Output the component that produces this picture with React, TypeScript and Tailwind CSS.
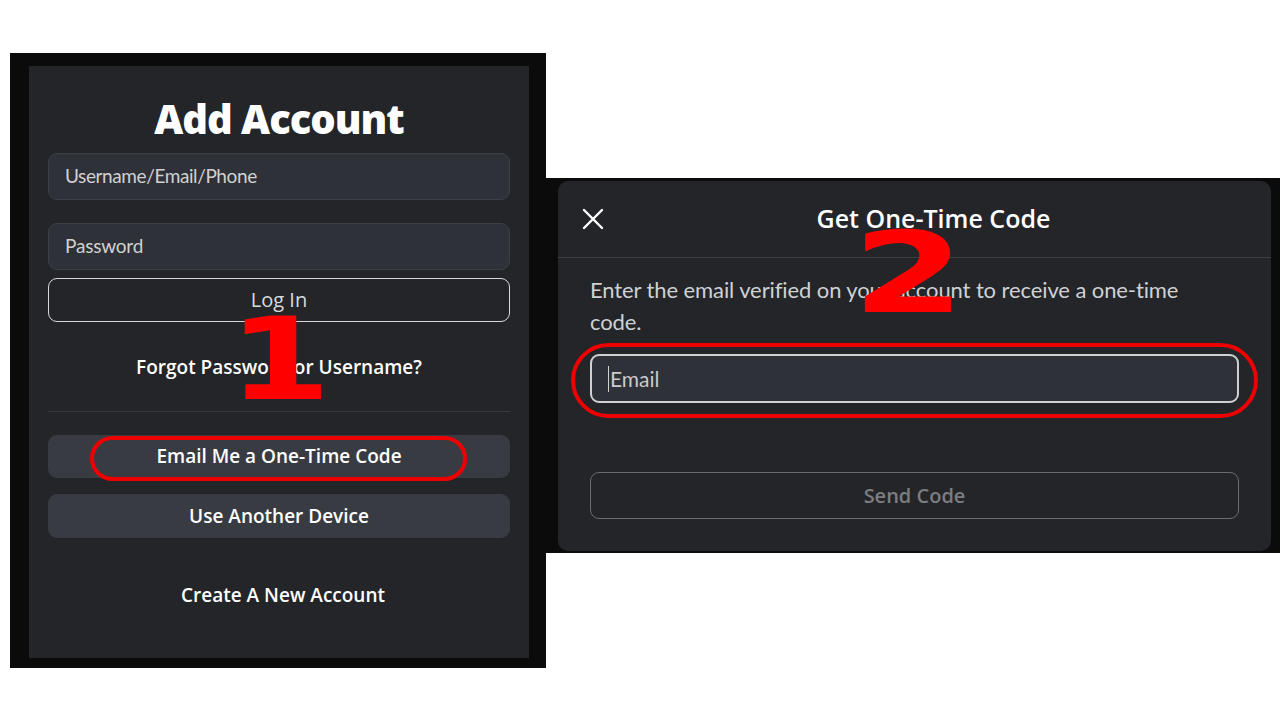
import React from "react";

const font = { fontFamily: '"Open Sans", "Noto Sans", sans-serif' };
const lato = { fontFamily: 'Lato, "Open Sans", sans-serif' };

function XIcon() {
  return (
    <svg width="22" height="22" viewBox="0 0 22 22" fill="none" stroke="white" strokeWidth="2.4" strokeLinecap="round">
      <path d="M2 2 L20 20 M20 2 L2 20" />
    </svg>
  );
}

export default function App() {
  return (
    <div className="w-[1280px] h-[720px] bg-white flex items-start pl-[10px] overflow-hidden" style={font}>
      {/* Left panel */}
      <div className="mt-[53px] w-[536px] h-[615px] bg-[#0b0b0c] pl-[19px] pr-[17px] pt-[13px] pb-[10px]">
        <div className="relative w-[500px] h-[592px] bg-[#232529] px-[19px] pt-[30px]">
          <h1 className="text-center text-white text-[40px] font-extrabold leading-[46px] tracking-tight">Add Account</h1>
          <div className="mt-[11px] h-[47px] rounded-[9px] bg-[#2e3138] border border-[#3c3f46] flex items-center px-[16px] text-[19px] tracking-[-0.4px] text-[#d0d1d3]" style={lato}>
            Username/Email/Phone
          </div>
          <div className="mt-[23px] h-[47px] rounded-[9px] bg-[#2e3138] border border-[#3c3f46] flex items-center px-[16px] text-[19px] tracking-[-0.2px] text-[#d0d1d3]" style={lato}>
            Password
          </div>
          <div className="mt-[8px] h-[44px] rounded-[9px] border border-[#d9d9d9] flex items-center justify-center text-[20px] font-medium text-[#d9dadc]">
            Log In
          </div>
          <div className="mt-[32px] text-center text-white text-[19px] font-semibold leading-[26px]">
            Forgot Password or Username?
          </div>
          <div className="mt-[31px] h-px bg-[#393b40]" />
          <div className="mt-[23px] h-[43px] rounded-[9px] bg-[#393b42] flex items-center justify-center text-[19px] font-semibold text-white">
            Email Me a One-Time Code
          </div>
          <div className="mt-[16px] h-[44px] rounded-[9px] bg-[#393b42] flex items-center justify-center text-[19px] font-semibold text-white">
            Use Another Device
          </div>
          <div className="mt-[44px] text-center text-white text-[19px] font-semibold leading-[26px] pl-[8px]">
            Create A New Account
          </div>

          {/* annotations */}
          <div className="absolute left-[61px] top-[370px] w-[377px] h-[45px] rounded-full border-[4px] border-[#ee0000]" />
          <div
            className="absolute left-[199px] top-[237px] text-[#ff0000] text-[114px] font-black leading-none origin-left"
            style={{ fontFamily: '"DejaVu Sans", sans-serif', transform: "scaleX(1.3)" }}
          >
            1
          </div>
        </div>
      </div>

      {/* Right panel */}
      <div className="mt-[178px] w-[734px] h-[375px] bg-[#0b0b0c] pl-[12px] pr-[9px] pt-[3px] pb-[2px]">
        <div className="relative w-[713px] h-[370px] rounded-[10px] bg-[#232529]">
          <div className="h-[77px] flex items-center px-[24px] border-b border-[#3d3f44]">
            <XIcon />
            <div className="flex-1 text-center text-white text-[25px] font-semibold pl-[16px]">Get One-Time Code</div>
          </div>
          <div className="px-[32px] pt-[16px]">
            <p className="text-[22px] leading-[32px] text-[#d0d1d3] w-[625px] tracking-[-0.1px]" style={lato}>
              Enter the email verified on your account to receive a one-time code.
            </p>
            <div className="mt-[16px] h-[49px] rounded-[9px] bg-[#2e3138] border-2 border-[#cfd0d2] flex items-center px-[16px] text-[21px] text-[#c9cacc]" style={lato}>
              <span className="w-px h-[26px] bg-[#d0d0d0] mr-px" />
              Email
            </div>
            <div className="mt-[69px] h-[47px] rounded-[9px] border border-[#6a6c70] flex items-center justify-center text-[20px] text-[#7b7d81] font-semibold">
              Send Code
            </div>
          </div>

          {/* annotations */}
          <div className="absolute left-[13px] top-[162px] w-[687px] h-[75px] rounded-[40px] border-[4px] border-[#ee0000]" />
          <div
            className="absolute left-[294px] top-[36px] text-[#ff0000] text-[112px] font-black leading-none origin-left"
            style={{ fontFamily: '"DejaVu Sans", sans-serif', transform: "scaleX(1.45)" }}
          >
            2
          </div>
        </div>
      </div>
    </div>
  );
}
